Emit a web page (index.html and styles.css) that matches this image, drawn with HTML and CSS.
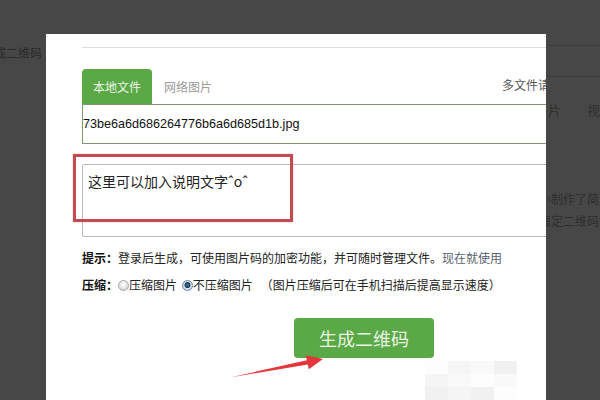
FILE: index.html
```html
<!DOCTYPE html>
<html lang="zh-CN">
<head>
<meta charset="utf-8">
<title>生成二维码</title>
<link rel="stylesheet" href="styles.css">
</head>
<body>
<div class="backdrop">
  <div class="bg-left"><span class="bg-title">生成二维码</span></div>
  <div class="bg-middle"></div>
  <div class="bg-right">
    <div class="bg-line first"></div>
    <div class="bg-line second"></div>
    <div class="bg-tabs"><span>片</span><span class="bg-tab2">视频</span></div>
    <div class="bg-text">小制作了简单</div>
    <div class="bg-text">搞定二维码</div>
  </div>
</div>

<div class="modal">
  <div class="rule"></div>
  <div class="tabs">
    <div class="tab active">本地文件</div>
    <div class="tab">网络图片</div>
    <div class="tab-extra">多文件请求</div>
  </div>
  <div class="filebox">73be6a6d686264776b6a6d685d1b.jpg</div>
  <div class="desc">这里可以加入说明文字ˆoˆ</div>
  <p class="tip"><b>提示：</b>登录后生成，可使用图片码的加密功能，并可随时管理文件。<a class="link">现在就使用</a></p>
  <p class="compress"><b>压缩：</b><span class="radio"></span>压缩图片 <span class="radio on"></span>不压缩图片<span class="note">（图片压缩后可在手机扫描后提高显示速度）</span></p>
  <div class="btn-row"><button class="btn">生成二维码</button></div>

  <div class="mosaic">
    <span class="m a"></span><span class="m b"></span><span class="m c"></span><span class="m d"></span>
    <span class="m b"></span><span class="m c"></span><span class="m a"></span><span class="m c"></span>
    <span class="m d"></span><span class="m b"></span><span class="m d"></span><span class="m a"></span>
  </div>

  <div class="highlight"></div>
  <svg class="arrow" width="500" height="366" viewBox="0 0 500 366">
    <polygon points="184,343.5 260.8,326.2 259.8,321.3 277,325 262.8,335.2 261.8,330.4" fill="#e2363b"/>
  </svg>
</div>
</body>
</html>
```

FILE: styles.css
```css
html, body {
  margin: 0;
  padding: 0;
}

body {
  width: 600px;
  height: 400px;
  overflow: hidden;
  background: #474747;
  font-family: "Noto Sans CJK SC", "Noto Sans", sans-serif;
  position: relative;
}

/* dimmed page behind the dialog */
.backdrop {
  display: flex;
  width: 600px;
  height: 400px;
}

.bg-left {
  width: 46px;
  overflow: hidden;
  display: flex;
  justify-content: flex-end;
  padding-top: 45px;
  box-sizing: border-box;
}

.bg-title {
  white-space: nowrap;
  font-size: 12px;
  line-height: 16px;
  color: #2a2a2a;
  padding-right: 4px;
}

.bg-middle {
  width: 500px;
}

.bg-right {
  flex: 1;
  overflow: hidden;
  padding-top: 45px;
}

.bg-line {
  height: 1px;
  background: #3c3c3c;
}

.bg-line.second {
  margin-top: 30px;
}

.bg-tabs {
  margin-top: 25px;
  font-size: 13px;
  line-height: 16px;
  color: #303030;
  white-space: nowrap;
  padding-left: 2px;
}

.bg-tab2 {
  margin-left: 26px;
}

.bg-text {
  white-space: nowrap;
  font-size: 12px;
  line-height: 22px;
  color: #2e2e2e;
  margin-left: -7px;
}

.bg-tabs + .bg-text {
  margin-top: 70px;
}

/* dialog */
.modal {
  position: absolute;
  left: 46px;
  top: 34px;
  width: 500px;
  height: 366px;
  background: #fff;
  overflow: hidden;
  padding: 13px 0 0 36px;
  box-sizing: border-box;
}

.rule {
  height: 1px;
  background: #dedede;
}

.tabs {
  display: flex;
  width: 480px;
  height: 35px;
  margin-top: 21px;
  font-size: 12px;
  line-height: 35px;
}

.tab {
  padding: 0 12px;
  color: #9a9a9a;
}

.tab.active {
  width: 70px;
  padding: 0;
  box-sizing: border-box;
  text-align: center;
  background: #5aa846;
  color: #eef7e8;
  border-radius: 4px 4px 0 0;
}

.tab-extra {
  margin-left: auto;
  white-space: nowrap;
  color: #555;
  font-size: 12px;
  line-height: 32px;
}

.filebox {
  width: 480px;
  height: 40px;
  box-sizing: border-box;
  border: 1px solid #7c9a6c;
  font-family: "Liberation Sans", Arial, sans-serif;
  font-size: 12.6px;
  line-height: 38px;
  color: #111;
  white-space: nowrap;
}

.desc {
  width: 480px;
  height: 73px;
  margin-top: 20px;
  box-sizing: border-box;
  border: 1px solid #b8b8b8;
  border-radius: 2px;
  padding: 6px 5px;
  font-size: 14px;
  line-height: 20px;
  color: #222;
}

.tip,
.compress {
  margin: 12px 0 0;
  font-size: 12px;
  line-height: 18px;
  color: #222;
  white-space: nowrap;
}

.compress {
  margin-top: 9px;
}

.tip b,
.compress b {
  font-weight: bold;
  color: #111;
}

.link {
  color: #58616d;
}

.radio {
  display: inline-block;
  width: 11px;
  height: 11px;
  box-sizing: border-box;
  border-radius: 50%;
  border: 1px solid #a9a9a9;
  background: radial-gradient(circle at 50% 40%, #ffffff 0, #f4f4f4 2px, #d6d6d6 5px);
  vertical-align: -1px;
}

.radio.on {
  margin-left: 2px;
  border-color: #6f8aa5;
  background: radial-gradient(circle at 50% 45%, #4a7aa8 0, #1a3a5c 2.6px, #dbe4ee 3.4px, #c2d0de 5px);
}

.note {
  margin-left: 8px;
}

.btn-row {
  display: flex;
  margin-top: 24px;
  padding-left: 212px;
}

.btn {
  width: 140px;
  height: 40px;
  border: 0;
  border-radius: 4px;
  background: #5aa846;
  color: #e9f4e3;
  font-family: "Noto Sans CJK SC", "Noto Sans", sans-serif;
  font-size: 18px;
  line-height: 40px;
  padding: 0;
}

/* pixelated remnant at the bottom */
.mosaic {
  position: absolute;
  left: 379px;
  top: 327px;
  display: grid;
  grid-template-columns: repeat(4, 23px);
  grid-auto-rows: 13px;
}

.m.a { background: #fdfdfd; }
.m.b { background: #f5f5f5; }
.m.c { background: #f9f9f9; }
.m.d { background: #f1f1f1; }

/* annotations */
.highlight {
  position: absolute;
  left: 27px;
  top: 120px;
  width: 220px;
  height: 68px;
  box-sizing: border-box;
  border: 3px solid #c24c50;
  box-shadow: 0 0 1px rgba(194, 76, 80, 0.6);
}

.arrow {
  position: absolute;
  left: 0;
  top: 0;
}
```
